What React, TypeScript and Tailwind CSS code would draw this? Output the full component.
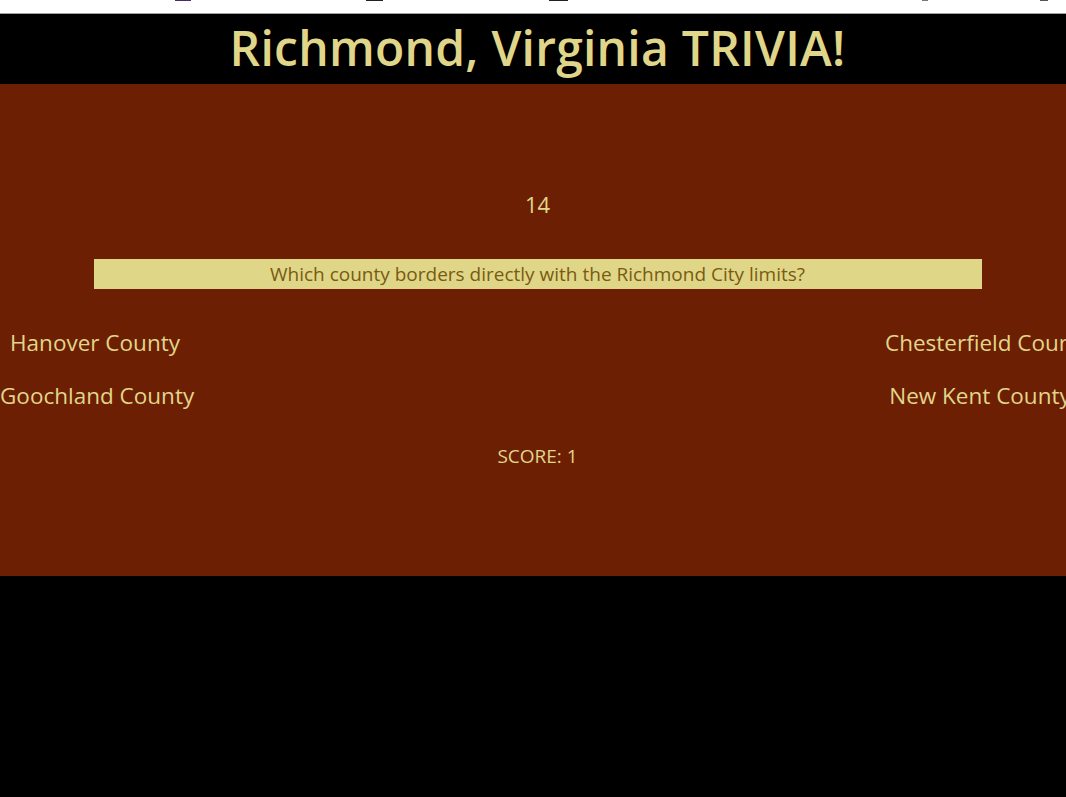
import React from 'react';

const answers = [
  ['Hanover County', 'Chesterfield County'],
  ['Goochland County', 'New Kent County'],
];

const App: React.FC = () => {
  return (
    <div className="min-h-[797px] bg-black overflow-hidden font-['Open_Sans','Noto_Sans',sans-serif]">
      {/* browser strip */}
      <div className="h-[14px] bg-white border-b border-[#a0a0a0] relative">
        <div className="absolute bottom-[12px] left-[175px] w-[16px] h-[2px] bg-[#4b2a6e]" />
        <div className="absolute bottom-[12px] left-[366px] w-[17px] h-[2px] bg-[#222]" />
        <div className="absolute bottom-[12px] left-[549px] w-[19px] h-[2px] bg-[#222]" />
        <div className="absolute bottom-[12px] left-[922px] w-[6px] h-[2px] bg-[#777]" />
        <div className="absolute bottom-[12px] left-[1040px] w-[8px] h-[2px] bg-[#555]" />
      </div>

      <div className="w-[1075px]">
        <header className="h-[70px] flex items-center justify-center">
          <h1 className="text-[48px] font-semibold text-[#e0d68a] leading-none tracking-[0.25px] -mt-[3px]">
            Richmond, Virginia TRIVIA!
          </h1>
        </header>

        <main className="bg-[#6d1f03] h-[492px] pt-[104px] flex flex-col items-center">
          <div className="text-[22px] text-[#e0d68a] leading-[32px]">14</div>

          <div className="mt-[39px] w-[888px] h-[30px] bg-[#e0d687] flex items-center justify-center">
            <span className="text-[19px] text-[#7a5a12]">Which county borders directly with the Richmond City limits?</span>
          </div>

          <div className="mt-[38px] w-full flex flex-col gap-[21px]">
            {answers.map((row, i) => (
              <div key={i} className="w-full flex justify-between">
                {row.map((a) => (
                  <div key={a} className="w-[190px] text-center text-[22.5px] leading-[32px] text-[#e0d68a] whitespace-nowrap">
                    {a}
                  </div>
                ))}
              </div>
            ))}
          </div>

          <div className="mt-[31px] text-[19px] text-[#e0d68a] leading-[26px]">SCORE: 1</div>
        </main>
      </div>
    </div>
  );
};

export default App;
